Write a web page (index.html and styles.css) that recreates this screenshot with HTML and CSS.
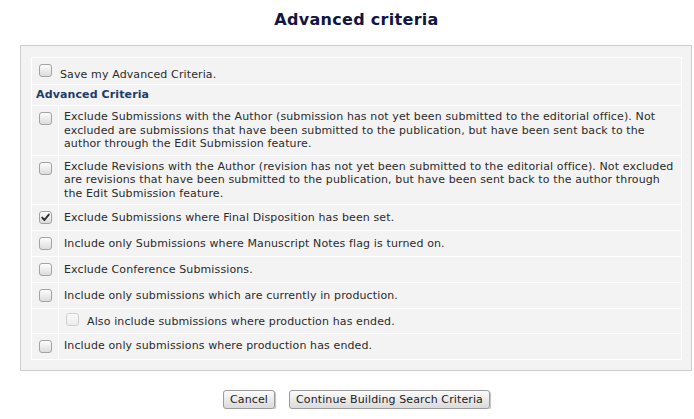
FILE: index.html
```html
<!DOCTYPE html>
<html lang="en">
<head>
<meta charset="utf-8">
<title>Advanced criteria</title>
<link rel="stylesheet" href="styles.css">
</head>
<body>
<h1 class="title">Advanced criteria</h1>
<div class="panel">
  <table class="criteria">
    <colgroup>
      <col class="col-box">
      <col class="col-text">
    </colgroup>
    <tr>
      <td class="save" colspan="2"><span class="cb"></span><span class="lbl">Save my Advanced Criteria.</span></td>
    </tr>
    <tr>
      <th class="head" colspan="2">Advanced Criteria</th>
    </tr>
    <tr>
      <td class="box top"><span class="cb"></span></td>
      <td class="text multi">Exclude Submissions with the Author (submission has not yet been submitted to the editorial office). Not<br>excluded are submissions that have been submitted to the publication, but have been sent back to the<br>author through the Edit Submission feature.</td>
    </tr>
    <tr>
      <td class="box top"><span class="cb"></span></td>
      <td class="text multi">Exclude Revisions with the Author (revision has not yet been submitted to the editorial office). Not excluded<br>are revisions that have been submitted to the publication, but have been sent back to the author through<br>the Edit Submission feature.</td>
    </tr>
    <tr>
      <td class="box"><span class="cb on"><svg viewBox="0 0 11 11" width="11" height="11"><path d="M2.2 5.6 L4.4 8 L8.8 2.6" fill="none" stroke="#2f2f2f" stroke-width="1.9" stroke-linecap="round" stroke-linejoin="round"/></svg></span></td>
      <td class="text">Exclude Submissions where Final Disposition has been set.</td>
    </tr>
    <tr>
      <td class="box"><span class="cb"></span></td>
      <td class="text">Include only Submissions where Manuscript Notes flag is turned on.</td>
    </tr>
    <tr>
      <td class="box"><span class="cb"></span></td>
      <td class="text">Exclude Conference Submissions.</td>
    </tr>
    <tr>
      <td class="box"><span class="cb"></span></td>
      <td class="text">Include only submissions which are currently in production.</td>
    </tr>
    <tr>
      <td class="box"></td>
      <td class="text sub"><span class="cb off"></span><span class="lbl">Also include submissions where production has ended.</span></td>
    </tr>
    <tr>
      <td class="box"><span class="cb"></span></td>
      <td class="text">Include only submissions where production has ended.</td>
    </tr>
  </table>
</div>
<div class="actions">
  <button class="btn" type="button">Cancel</button>
  <button class="btn" type="button">Continue Building Search Criteria</button>
</div>
</body>
</html>
```
FILE: styles.css
```css
html, body {
  margin: 0;
  padding: 0;
  background: #ffffff;
}

body {
  font-family: "DejaVu Sans", Verdana, sans-serif;
  font-size: 11px;
  letter-spacing: 0.12px;
  color: #2b2b2b;
  width: 694px;
}

.title {
  margin: 10px 0 0 20px;
  width: 673px;
  height: 35px;
  text-align: center;
  font-size: 16px;
  font-weight: bold;
  letter-spacing: 0.3px;
  color: #111541;
  line-height: 19px;
}

.panel {
  margin-left: 20px;
  width: 651px;
  padding: 11px 9px 10px 10px;
  background: #f3f3f3;
  border: 1px solid #cdcdcd;
}

.criteria {
  width: 651px;
  table-layout: fixed;
  border-collapse: collapse;
  border: 1px solid #ffffff;
}

.col-box {
  width: 27px;
}

.criteria td,
.criteria th {
  border-bottom: 1px solid #ffffff;
  padding: 0;
}

.save {
  padding: 4px 0 3px 7px !important;
}

.save .cb {
  margin: 2px 8px 0 0;
  vertical-align: top;
}

.save .lbl {
  display: inline-block;
  padding-top: 6px;
  line-height: 13px;
}

.head {
  text-align: left;
  font-weight: bold;
  color: #1d3c6b;
  padding: 3px 4px 3px 4px !important;
  line-height: 14px;
}

.box {
  border-right: 1px solid #ffffff;
  text-align: center;
  vertical-align: middle;
  padding: 6px 0 !important;
  line-height: 0;
}

.box.top {
  vertical-align: top;
}

.text {
  padding: 4px 3px 4px 5px !important;
  line-height: 13.5px;
  vertical-align: middle;
}

.text.multi {
  white-space: nowrap;
}

.cb {
  display: inline-block;
  box-sizing: border-box;
  width: 13px;
  height: 13px;
  border: 1px solid #a3a3a3;
  border-radius: 3px;
  background: linear-gradient(#fdfdfd, #dcdcdc);
  position: relative;
}

.cb svg {
  position: absolute;
  left: 0;
  top: 0;
}

.cb.off {
  border-color: #cfcfcf;
  background: linear-gradient(#f9f9f9, #ececec);
}

.sub .cb {
  margin: 0 8px 0 2px;
  vertical-align: -1px;
}

.actions {
  margin-left: 20px;
  width: 673px;
  padding-top: 19px;
  display: flex;
  justify-content: center;
  gap: 14px;
}

.btn {
  font-family: "DejaVu Sans", Verdana, sans-serif;
  font-size: 11px;
  letter-spacing: 0.12px;
  color: #222;
  height: 19px;
  line-height: 15px;
  padding: 1px 6px;
  border: 1px solid #9b9b9b;
  border-radius: 3px;
  background: linear-gradient(#fbfbfb, #dadada);
  box-shadow: 1px 1px 1px rgba(0, 0, 0, 0.25);
}
```
